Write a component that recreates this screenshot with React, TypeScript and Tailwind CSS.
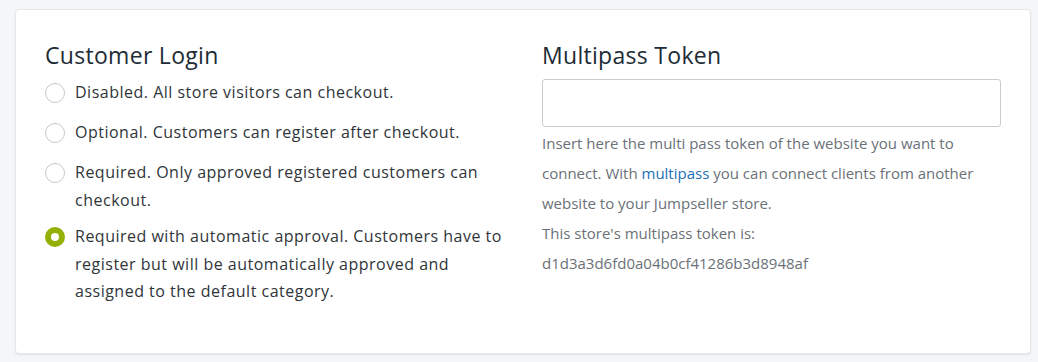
const options = [
  { id: "disabled", label: "Disabled. All store visitors can checkout." },
  { id: "optional", label: "Optional. Customers can register after checkout." },
  { id: "required", label: "Required. Only approved registered customers can checkout." },
  {
    id: "auto",
    label:
      "Required with automatic approval. Customers have to register but will be automatically approved and assigned to the default category.",
  },
];

const Radio = ({ checked }: { checked: boolean }) =>
  checked ? (
    <span className="mt-[4px] box-border size-[20px] shrink-0 rounded-full border-[6px] border-[#92b104] bg-white" />
  ) : (
    <span className="mt-[4px] box-border size-[20px] shrink-0 rounded-full border border-[#c4c8cd] bg-white" />
  );

export default function App() {
  const selected = "auto";

  return (
    <div className="min-h-[362px] bg-[#f5f6f8] pl-[15px] pr-[7px] pt-[9px] font-['Open_Sans',sans-serif]">
      <div className="flex h-[345px] rounded-[4px] border border-[#e4e6e9] bg-white pl-[29px] pr-[29px] pt-[29px] shadow-[0_1px_2px_rgba(0,0,0,0.08)]">
        <div className="w-[460px] shrink-0">
          <h2 className="text-[23px] leading-[32px] tracking-[0.3px] text-[#212b36]">Customer Login</h2>
          <div className="mt-[8px] flex flex-col gap-[9px]">
            {options.map((o) => (
              <label key={o.id} className="flex min-h-[31px] items-start gap-[10px]">
                <Radio checked={o.id === selected} />
                <span className="text-[16px] leading-[27.5px] tracking-[0.5px] text-[#303539]">{o.label}</span>
              </label>
            ))}
          </div>
        </div>
        <div className="ml-[37px] flex-1">
          <h2 className="text-[23px] leading-[32px] tracking-[0.3px] text-[#212b36]">Multipass Token</h2>
          <input
            type="text"
            className="mt-[8px] block h-[48px] w-full rounded-[3px] border border-[#c9cdd2] bg-white px-3 outline-none"
          />
          <div className="mt-[1px] text-[15px] leading-[30px] text-[#6b7177]">
            <p>
              Insert here the multi pass token of the website you want to connect. With{" "}
              <a className="text-[#1c6fb5]">multipass</a> you can connect clients from another website to
              your Jumpseller store.
            </p>
            <p>This store's multipass token is:</p>
            <p>d1d3a3d6fd0a04b0cf41286b3d8948af</p>
          </div>
        </div>
      </div>
    </div>
  );
}
